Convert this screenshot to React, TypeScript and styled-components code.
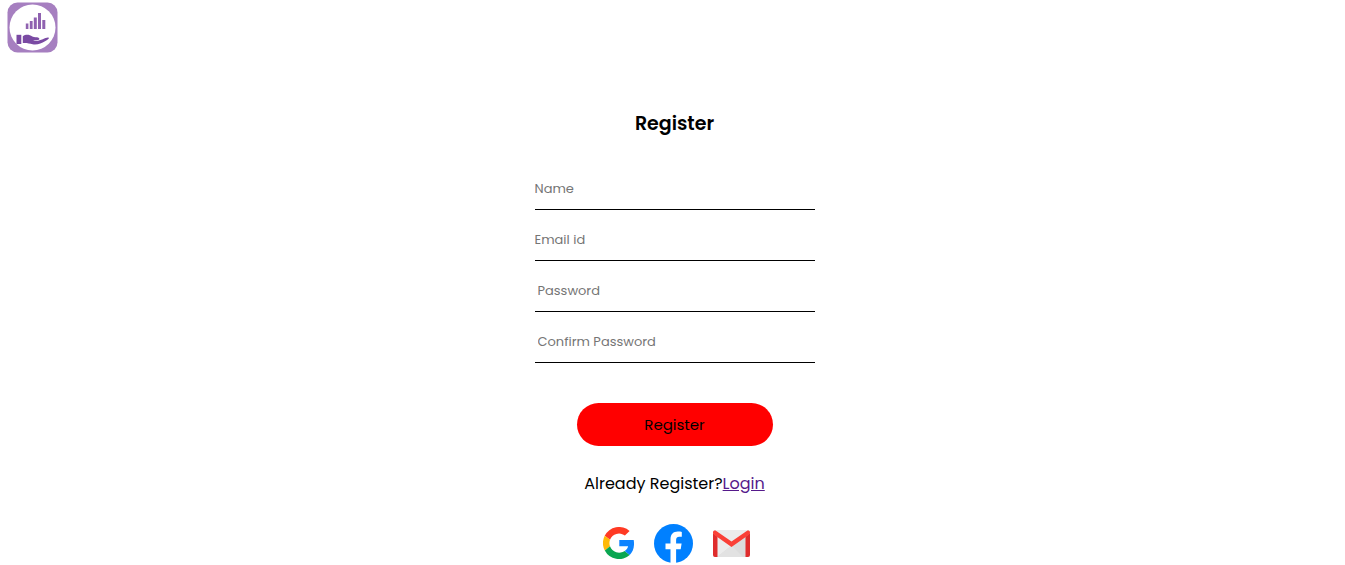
import React from "react";
import styled, { createGlobalStyle } from "styled-components";

const GlobalStyle = createGlobalStyle`
  *, *::before, *::after { box-sizing: border-box; }
  body {
    margin: 0;
    background: #fff;
    color: #000;
    font-family: Poppins, Inter, "Open Sans", sans-serif;
    font-size: 16px;
    line-height: 24px;
  }
`;

const Header = styled.header`
  display: flex;
  padding: 2px 7px 0;
`;

const HomeLink = styled.a`
  display: block;
  height: 52px;
`;

const Main = styled.main`
  display: flex;
  flex-direction: column;
  align-items: center;
  padding: 56px 0 0 4px;
`;

const Title = styled.h1`
  margin: 0;
  font-size: 19px;
  line-height: 28px;
  font-weight: 600;
`;

const Form = styled.form`
  display: flex;
  flex-direction: column;
  align-items: center;
  gap: 10px;
  width: 280px;
  max-width: 100%;
  margin-top: 31px;
`;

const Field = styled.input<{ $indent?: boolean }>`
  width: 100%;
  height: 41px;
  padding: 0 0 0 ${(p) => (p.$indent ? "3px" : "0")};
  border: 0;
  border-bottom: 1px solid #000;
  border-radius: 0;
  background: transparent;
  font-family: inherit;
  font-size: 13px;
  outline: none;

  &::placeholder {
    color: #757575;
    opacity: 1;
  }
`;

const SubmitButton = styled.button`
  width: 70%;
  height: 43px;
  margin-top: 30px;
  padding: 0;
  border: 0;
  border-radius: 22px;
  background: #ff0000;
  color: #000;
  font-family: inherit;
  font-size: 15px;
  cursor: pointer;
`;

const LoginPrompt = styled.p`
  margin: 26px 0 0;
`;

const LoginLink = styled.a`
  color: #551a8b;
  text-decoration: underline;
`;

const SocialList = styled.nav`
  display: flex;
  align-items: center;
  gap: 20px;
  height: 39px;
  margin-top: 28px;
  padding-left: 4px;
`;

const SocialLink = styled.a`
  display: flex;
`;

const fields = [
  { name: "name", label: "Name", type: "text", indent: false },
  { name: "email", label: "Email id", type: "email", indent: false },
  { name: "password", label: "Password", type: "password", indent: true },
  { name: "confirm", label: "Confirm Password", type: "password", indent: true },
];

const Logo = () => (
  <svg width="51" height="52" viewBox="0 0 51 52" aria-hidden="true">
    <rect x="0.5" y="0.5" width="50" height="50" rx="10" fill="#a67fc0" />
    <circle cx="25.5" cy="25.5" r="23" fill="#fff" />
    <g fill="#8f62b0">
      <rect x="18.800" y="21.500" width="2.600" height="5.500" />
      <rect x="22.800" y="19" width="2.800" height="8" />
      <rect x="26.800" y="15.500" width="3" height="11.500" />
      <rect x="31" y="11" width="3" height="16" />
      <rect x="35.300" y="18" width="3" height="9" />
    </g>
    <g fill="#7a4aa3">
      <rect x="9.500" y="32.800" width="4.800" height="9.200" />
      <path d="M15.800 34.300c3-2.200 6.500-1.800 9.500.2 2 1.100 4.600.4 6.300 1.200 1.400.8.800 2.200-.6 2.400l-5 .2c3.400 1 6.600.4 9.800-1 2.600-1.200 4.600-2.200 6-1.600.7.800-1.400 2-3.800 3.500-3.600 2.400-7.800 3.700-12.400 3-3.400-.7-6.200-1.500-9.800-1.100z" />
    </g>
  </svg>
);

const GoogleIcon = () => (
  <svg width="31" height="34" viewBox="0 0 31 34" aria-hidden="true">
    <path fill="#ff3a24" d="M1.700 8.800A16 16 0 0 1 26.600 4l-4.700 4.500A9.700 9.700 0 0 0 7 12.700z" />
    <path fill="#ffb907" d="M1.700 8.800A16 16 0 0 0 1.800 23.400L7 19.300a9.700 9.700 0 0 1 0-6.600z" />
    <path fill="#0aa651" d="M1.800 23.400A16 16 0 0 0 26.700 28l-5-4.100A9.700 9.700 0 0 1 7 19.300z" />
    <path fill="#0d83ff" d="M16.300 13H30.700c1 6-.3 11.500-4 15l-5-4.100c1.800-1.100 2.900-2.600 3.400-4.700h-8.800z" />
  </svg>
);

const FacebookIcon = () => (
  <svg width="39" height="39" viewBox="0 0 39 39" aria-hidden="true">
    <circle cx="19.500" cy="19.500" r="19.500" fill="#0080ff" />
    <path
      fill="#fff"
      d="M16.500 39V25.200h-5v-5.700h5v-4.300c0-5 2.900-7.700 7.400-7.700 1.500 0 3 .2 3.900.4v4.900h-2.500c-2.500 0-3.200 1.500-3.200 3.100v3.600h5.500l-.9 5.700h-4.600V39z"
    />
  </svg>
);

const GmailIcon = () => (
  <svg width="37" height="27" viewBox="0 0 37 28" preserveAspectRatio="none" aria-hidden="true">
    <rect width="37" height="28" rx="2" fill="#ececec" />
    <path fill="#dcdcdc" d="M4 28L18.500 16 33 6v22z" />
    <path fill="#e2e2e2" d="M4 28L18.500 16 30 28z" />
    <path fill="#df2c2c" d="M0 3l4.500 4v21H2a2 2 0 0 1-2-2zM37 3l-4.500 4v21H35a2 2 0 0 0 2-2z" />
    <path fill="#fa4037" d="M0 2.500C0 .5 2 .2 3.300 1L18.500 12 33.700 1C35 .2 37 .5 37 2.500c0 1.200-.6 2-1.500 2.700L18.500 17.500 1.500 5.200C.6 4.500 0 3.700 0 2.500z" />
  </svg>
);

export default function App() {
  return (
    <>
      <GlobalStyle />
      <Header>
        <HomeLink href="#" aria-label="Home">
          <Logo />
        </HomeLink>
      </Header>
      <Main>
        <Title>Register</Title>
        <Form onSubmit={(e) => e.preventDefault()}>
          {fields.map((f) => (
            <Field
              key={f.name}
              name={f.name}
              type={f.type}
              placeholder={f.label}
              aria-label={f.label}
              $indent={f.indent}
            />
          ))}
          <SubmitButton type="submit">Register</SubmitButton>
        </Form>
        <LoginPrompt>
          Already Register?<LoginLink href="#">Login</LoginLink>
        </LoginPrompt>
        <SocialList aria-label="Other ways to register">
          <SocialLink href="#" aria-label="Google">
            <GoogleIcon />
          </SocialLink>
          <SocialLink href="#" aria-label="Facebook">
            <FacebookIcon />
          </SocialLink>
          <SocialLink href="#" aria-label="Gmail">
            <GmailIcon />
          </SocialLink>
        </SocialList>
      </Main>
    </>
  );
}
